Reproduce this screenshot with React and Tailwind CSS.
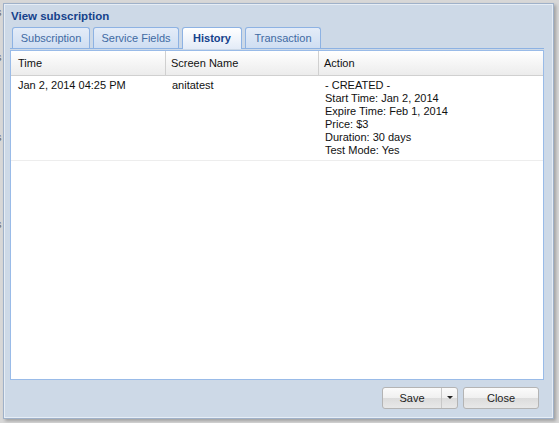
import React from 'react'

const font = { fontFamily: '"Liberation Sans", Arial, sans-serif' }

const tabs = [
  { label: 'Subscription', w: 'w-[78px]' },
  { label: 'Service Fields', w: 'w-[86px]' },
  { label: 'History', w: 'w-[60px]' },
  { label: 'Transaction', w: 'w-[76px]' },
]

function Tab({ label, w, active }) {
  if (active) {
    return (
      <div className={`${w} h-[22px] -mb-px flex items-center justify-center rounded-t-[3px] border border-b-0 border-[#8db2e3] bg-gradient-to-b from-white to-[#e3ebf7] text-[11px] font-bold text-[#15428b] relative z-10`}>
        {label}
      </div>
    )
  }
  return (
    <div className={`${w} h-[21px] flex items-center justify-center rounded-t-[3px] border border-b-0 border-[#8db2e3] bg-gradient-to-b from-[#e4ecf8] to-[#cfdef2] text-[11px] text-[#416aa3]`}>
      {label}
    </div>
  )
}

function Button({ label, split }) {
  return (
    <div className="w-[76px] h-[22px] rounded-[3px] border border-[#b4b4b4] bg-[linear-gradient(#fbfbfb_0%,#f0f0f0_50%,#dcdcdc_51%,#e8e8e8_100%)] flex text-[11px] text-[#222]">
      <div className="flex-1 flex items-center justify-center">{label}</div>
      {split && (
        <div className="w-[16px] border-l border-[#c8c8c8] flex items-center justify-center">
          <svg width="6" height="4" viewBox="0 0 6 4"><path d="M0 0h6L3 3z" fill="#222" /></svg>
        </div>
      )}
    </div>
  )
}

export default function App() {
  const details = [
    '- CREATED -',
    'Start Time: Jan 2, 2014',
    'Expire Time: Feb 1, 2014',
    'Price: $3',
    'Duration: 30 days',
    'Test Mode: Yes',
  ]

  return (
    <div className="w-[559px] h-[423px] bg-[#d7d7d7] flex overflow-hidden" style={font}>
      {/* sliver of the page behind the dialog */}
      <div className="w-[3px] shrink-0 text-[11px] text-[#666] leading-[11px] overflow-hidden">
        <div className="mt-[7px] -ml-[4px]">s</div>
        <div className="mt-[34px] -ml-[4px]">s</div>
        <div className="mt-[69px] -ml-[4px]">s</div>
        <div className="mt-[76px] -ml-[4px]">s</div>
      </div>

      <div className="mt-[3px] w-[551px] h-[416px] shrink-0 border border-[#9fb1c9] bg-[#cdd9e7] shadow-[2px_2px_3px_rgba(0,0,0,0.25)] flex flex-col">
        <div className="border border-[#e6edf5] flex-1 flex flex-col px-[5px]">
          <div className="h-[19px] pt-[4px] text-[11.5px] font-bold text-[#15428b] leading-[14px] pl-[1px]">
            View subscription
          </div>

          {/* tab strip */}
          <div className="flex items-end gap-[3px] pl-[2px] mt-[3px] h-[22px] border-b border-[#8db2e3] mr-[3px]">
            {tabs.map((t) => (
              <Tab key={t.label} label={t.label} w={t.w} active={t.label === 'History'} />
            ))}
          </div>

          {/* panel body */}
          <div className="mt-[1px] h-[330px] mr-[3px] border border-[#99bbe8] bg-white flex flex-col text-[11px] text-[#111]">
            <div className="h-[25px] flex border-b border-[#d0d0d0] bg-gradient-to-b from-white to-[#ececec]">
              <div className="w-[155px] border-r border-[#d0d0d0] flex items-center pl-[7px]">Time</div>
              <div className="w-[153px] border-r border-[#d0d0d0] flex items-center pl-[5px]">Screen Name</div>
              <div className="flex-1 flex items-center pl-[5px]">Action</div>
            </div>
            <div className="flex border-b border-[#ededed] pt-[3px] pb-[3px] leading-[13px]">
              <div className="w-[155px] pl-[7px]">Jan 2, 2014 04:25 PM</div>
              <div className="w-[153px] pl-[6px]">anitatest</div>
              <div className="flex-1 pl-[6px]">
                {details.map((d) => (
                  <div key={d}>{d}</div>
                ))}
              </div>
            </div>
          </div>

          {/* buttons */}
          <div className="flex justify-end gap-[5px] mt-[7px] mr-[8px]">
            <Button label="Save" split />
            <Button label="Close" />
          </div>
        </div>
      </div>
    </div>
  )
}
